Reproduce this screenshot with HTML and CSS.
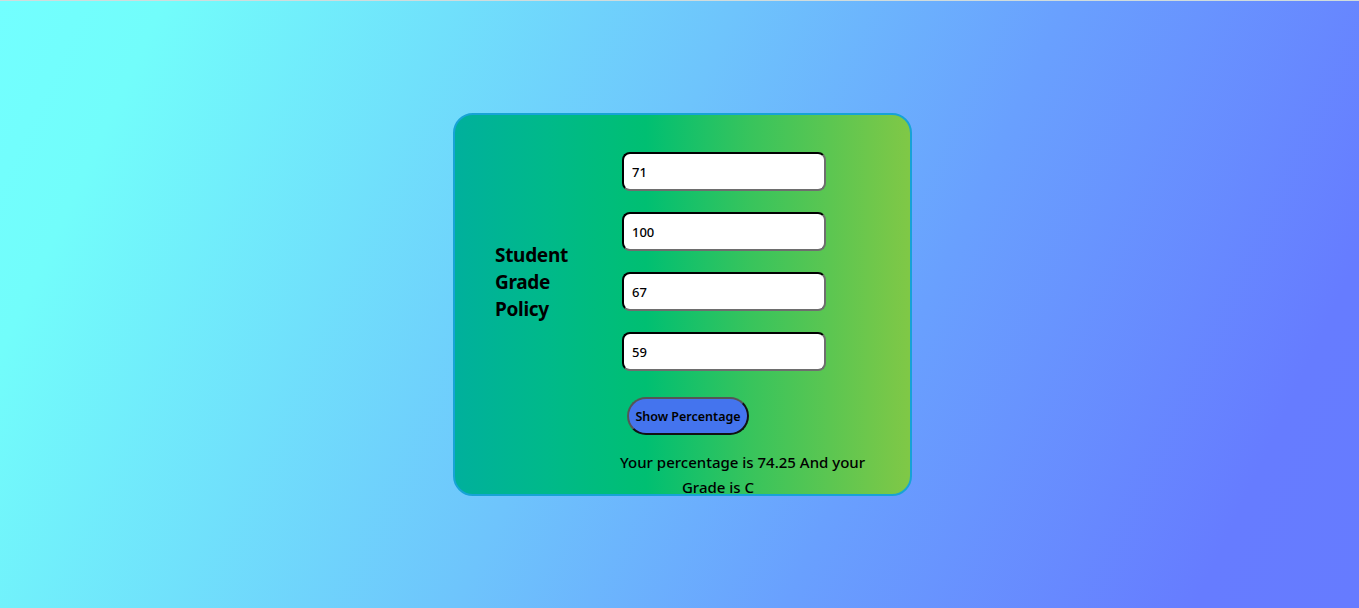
FILE: index.html
```html
<!DOCTYPE html>
<html lang="en">
<head>
<meta charset="utf-8">
<title>Student Grade Policy</title>
<link rel="stylesheet" href="styles.css">
</head>
<body>
<main class="page">
  <section class="card">
    <div class="title-col">
      <h1 class="title">Student Grade Policy</h1>
    </div>
    <form class="form-col">
      <input class="field" type="text" value="71">
      <input class="field" type="text" value="100">
      <input class="field" type="text" value="67">
      <input class="field" type="text" value="59">
      <button class="btn" type="button">Show Percentage</button>
      <p class="result"><span class="nowrap">Your percentage is 74.25 And your</span> Grade is C</p>
    </form>
  </section>
</main>
</body>
</html>
```
FILE: styles.css
```css
html, body {
  margin: 0;
  padding: 0;
}
body {
  font-family: "Noto Sans", "Open Sans", sans-serif;
  border-top: 1px solid #d0dcdc;
}
.page {
  height: 607px;
  box-sizing: border-box;
  background: linear-gradient(115deg, #72ffff 0%, #72fdfb 10%, #6ec4fc 45%, #69a0fe 65%, #667cff 90%, #667bff 100%);
  display: flex;
  justify-content: center;
  padding-top: 112px;
  padding-left: 6px;
}
.card {
  box-sizing: border-box;
  width: 459px;
  height: 383px;
  border: 2px solid #17a3d6;
  border-radius: 20px;
  background: linear-gradient(to right, #00b09c 0%, #00b98a 20%, #00bf72 42%, #38c45c 65%, #80c846 100%);
  display: flex;
  overflow: visible;
}
.title-col {
  width: 127px;
  padding-left: 40px;
  padding-top: 127px;
}
.title {
  margin: 0;
  max-width: 80px;
  font-size: 19px;
  font-weight: 700;
  line-height: 27px;
  color: #000;
  letter-spacing: -0.3px;
}
.form-col {
  display: flex;
  flex-direction: column;
  padding-top: 37px;
}
.field {
  box-sizing: border-box;
  width: 204px;
  height: 39px;
  flex: 0 0 39px;
  margin: 0 0 21px 0;
  border: 2px inset #767676;
  border-top-color: #1c1c1c;
  border-left-color: #1c1c1c;
  border-right-color: #6e6e6e;
  border-bottom-color: #6e6e6e;
  border-radius: 8px;
  background: #fff;
  padding: 0 8px;
  font-family: "Noto Sans", sans-serif;
  font-size: 13px;
  font-weight: 500;
  color: #000;
}
.field:last-of-type {
  margin-bottom: 0;
}
.btn {
  align-self: flex-start;
  margin: 26px 0 0 5px;
  box-sizing: border-box;
  width: 122px;
  height: 38px;
  flex: 0 0 38px;
  border-radius: 19px;
  border: 2px solid #111;
  border-top-color: #555;
  border-left-color: #555;
  background: #4474ee;
  color: #000;
  font-family: "Noto Sans", sans-serif;
  font-size: 12.5px;
  font-weight: 600;
  padding: 0;
}
.result {
  margin: 15px 0 0 -2px;
  width: 196px;
  text-align: center;
  font-size: 15px;
  font-weight: 500;
  line-height: 25px;
  color: #000;
}
.nowrap {
  white-space: nowrap;
}
```
